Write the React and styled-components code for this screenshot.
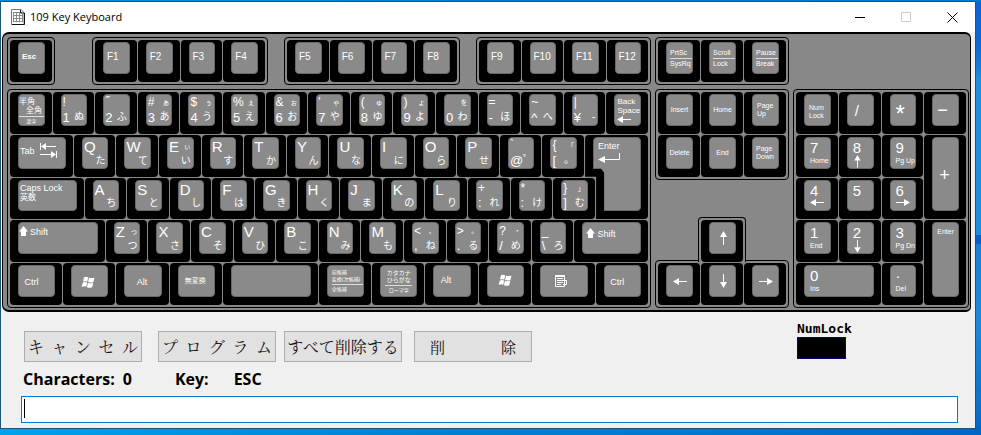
import React from "react";
import styled, { createGlobalStyle } from "styled-components";

const SANS = '"Liberation Sans", "Noto Sans CJK JP", sans-serif';
const UI = '"Open Sans", "Noto Sans", "Noto Sans CJK JP", sans-serif';

const GlobalStyle = createGlobalStyle`
  * { box-sizing: border-box; }
  body { margin: 0; font-family: ${UI}; }
  button { margin: 0; padding: 0; font: inherit; color: inherit; }
`;

const Desktop = styled.div`
  min-height: 100vh;
  display: flex;
  padding: 1px 5px 6px 0;
  background:
    linear-gradient(90deg, #00a2ea, #0080cf 45%, #0078cc 70%, #0066c4) bottom / 100% 8px no-repeat,
    linear-gradient(90deg, #008ad8, #0078cf) top / 100% 2px no-repeat,
    linear-gradient(#0a62d8, #0a68d8 10%, #1580dc 16%, #1c8fe0 18%, #1a8ee0 54%, #0560cc 54%, #0560cc 56%, #1580d8 56%, #1a8ade 74%, #0a70cc 94%, #0063c8);
`;

const Window = styled.main`
  flex: 1;
  min-width: 0;
  display: flex;
  flex-direction: column;
  border: 1px solid #1b5577;
  background: #f0f0f0;
`;

const TitleBar = styled.header`
  display: flex;
  align-items: center;
  height: 30px;
  padding-left: 10px;
  background: #fff;
`;

const Title = styled.h1`
  flex: 1;
  margin: 0 0 0 5px;
  font-size: 11px;
  font-weight: 400;
  line-height: 16px;
  color: #000;
`;

const WindowButton = styled.button`
  width: 46px;
  height: 28px;
  display: grid;
  place-items: center;
  border: 0;
  background: transparent;
  color: ${(p) => (p.disabled ? "#ccc" : "#000")};
`;

const Board = styled.section`
  display: grid;
  grid-template-columns: 644fr 134fr 176fr;
  grid-template-rows: 48px auto;
  gap: 4px;
  margin: 0 4px 0 1px;
  padding: 3px 1px 2px 4px;
  border: solid #000;
  border-width: 2px 1px 2px 1px;
  border-radius: 7px 6px 5px 7px;
  background: #888;
  color: #fff;
  font-family: ${SANS};
`;

const FunctionRow = styled.div`
  display: grid;
  grid-template-columns: 48fr 5fr 176fr 176fr 175fr;
  column-gap: 16px;
`;

const Frame = styled.div`
  display: grid;
  grid-template-columns: repeat(${(p) => p.$cols}, minmax(0, 1fr));
  grid-template-rows: repeat(${(p) => p.$rows}, minmax(0, 1fr));
  gap: 1px;
  height: ${(p) => [0, 48, 91, 0, 0, 219][p.$rows]}px;
  padding: 2px;
  border: 1px solid #000;
  border-radius: 4px;
  background: #888;
`;

const NavColumn = styled.div`
  display: flex;
  flex-direction: column;
  justify-content: space-between;
`;

const ArrowCluster = styled.div`
  display: flex;
  flex-direction: column;
  align-items: center;
`;

const UpFrame = styled(Frame)`
  position: relative;
  width: calc((100% - 6px) / 3 + 6px);
  height: 45px;
  margin-bottom: -2px;
  padding-bottom: 0;
  border-bottom: 0;
  border-radius: 4px 4px 0 0;
`;

const ArrowFrame = styled(Frame)`
  width: 100%;
`;

const KeyBase = styled.button`
  grid-column: ${(p) => (p.$col ? `${p.$col} / ` : "")}span ${(p) => p.$span || 1};
  grid-row: ${(p) => (p.$row ? `${p.$row} / ` : "")}span ${(p) => p.$tall || 1};
  display: flex;
  min-width: 0;
  padding: 2px 7px 8px 8px;
  border: 0;
  border-radius: 4px;
  background: #000;
  text-align: left;
`;

const EnterBase = styled(KeyBase)`
  clip-path: polygon(0 0, 100% 0, 100% 100%, 11px 100%, 11px 42px, 0 42px);
`;

const Cap = styled.span`
  flex: 1;
  min-width: 0;
  display: flex;
  flex-direction: column;
  justify-content: ${(p) => p.$justify || "center"};
  align-items: ${(p) => p.$align || "stretch"};
  padding: ${(p) => p.$pad || "0"};
  border: 1px solid #6a6a6a;
  border-radius: 4px;
  background: #8a8a8a;
  white-space: nowrap;
  font-size: ${(p) => p.$size || 7}px;
  font-weight: ${(p) => (p.$bold ? 700 : 400)};
  line-height: ${(p) => p.$line || 8}px;
`;

const EnterCap = styled(Cap)`
  clip-path: polygon(0 0, 100% 0, 100% 100%, 11px 100%, 11px 36px, 8px 32px, 0 32px);
`;

const Pair = styled.span`
  flex: 1;
  display: flex;
  align-items: center;
  justify-content: space-between;
  padding: 0 2px 0 1px;
  line-height: 1;
`;

const Glyph = styled.span`
  font-size: ${(p) => p.$size}px;
`;

const WithIcon = styled.span`
  display: flex;
  align-items: center;
  gap: ${(p) => p.$gap || 2}px;
`;

const Rule = styled.span`
  align-self: stretch;
  height: 1px;
  margin: 1px 0;
  background: #ddd;
`;

const Indent = styled.span`
  padding-left: 7px;
`;

const Tiny = styled.span`
  align-self: ${(p) => p.$self || "auto"};
  font-size: ${(p) => p.$size || 5}px;
  line-height: ${(p) => p.$line || 6}px;
`;

const Panel = styled.section`
  display: grid;
  grid-template-columns: 1fr 161px;
  padding: 11px 17px 0 20px;
  color: #000;
`;

const Actions = styled.div`
  display: flex;
  padding: 8px 0 0 3px;
`;

const ActionButton = styled.button`
  display: flex;
  align-items: center;
  justify-content: ${(p) => p.$fit || "space-between"};
  width: 118px;
  height: 31px;
  margin-right: ${(p) => p.$after || 0}px;
  padding: 0 ${(p) => p.$inset || 3}px;
  border: 1px solid #adadad;
  background: #e1e1e1;
  color: #1c1414;
  font-family: "Noto Serif CJK JP", "Noto Sans CJK JP", serif;
  font-size: ${(p) => p.$size || 16}px;
  font-weight: 400;
  white-space: nowrap;
`;

const Status = styled.dl`
  display: flex;
  margin: 6px 0 0 2px;
  font-size: 16px;
  font-weight: 700;
  line-height: 22px;
  dt { margin-right: 8px; }
  dd { margin: 0 43px 0 0; }
  dd + dt { margin-right: 25px; }
`;

const NumLock = styled.div`
  font-family: "DejaVu Sans Mono", monospace;
  font-size: 13px;
  font-weight: 700;
  line-height: 12px;
`;

const Lamp = styled.div`
  width: 49px;
  height: 22px;
  margin-top: 2px;
  border: 1px solid #000080;
  background: #000;
`;

const Entry = styled.div`
  position: relative;
  margin: 6px 17px 4px 20px;
`;

const EntryInput = styled.input`
  display: block;
  width: 100%;
  height: 27px;
  padding: 0 3px;
  border: 1px solid #0078d7;
  outline: 0;
  background: #fff;
  font: 16px ${UI};
  caret-color: transparent;
`;

const Caret = styled.span`
  position: absolute;
  top: 3px;
  left: 3px;
  width: 1px;
  height: 19px;
  background: #000;
`;

const ARROWS = {
  left: [14, 8, "M5 4.5H14", "M0 4.5L6 1V8Z"],
  right: [14, 8, "M0 4.5H9", "M14 4.5L8 1V8Z"],
  up: [8, 14, "M4.5 5V14", "M4.5 0L1 6H8Z"],
  down: [8, 14, "M4.5 0V9", "M4.5 14L1 8H8Z"],
};

function Arrow({ dir }) {
  const [w, h, line, head] = ARROWS[dir];
  return (
    <svg width={w} height={h} viewBox={`0 0 ${w} ${h}`} aria-hidden="true">
      <path d={line} stroke="#fff" />
      <path d={head} fill="#fff" />
    </svg>
  );
}

const Flag = () => (
  <svg width="14" height="13" viewBox="0 0 14 13" fill="#fff" aria-hidden="true">
    <path d="M3 1.2Q5 .2 7.2 1.2L6.3 5.6Q4.4 4.7 2 5.6ZM8 1.5Q10.5 2.6 13.5 1.5L12.4 5.9Q10 7 7.1 6ZM1.8 6.4Q4 5.5 6.2 6.4L5.3 10.8Q3 9.9 .6 10.9ZM6.9 6.8Q9.5 7.8 12.2 6.8L11.2 11.2Q8.5 12.3 6 11.2Z" />
  </svg>
);

const MenuIcon = () => (
  <svg width="12" height="13" viewBox="0 0 12 13" fill="none" stroke="#fff" aria-hidden="true">
    <path d="M.5 1.5H9.5V12.5H.5ZM2 4.5H8M2 6.5H11.5V10.5H8M2 8.5H8M2 10.5H6" />
    <path d="M0 1H10V3H0Z" fill="#fff" stroke="none" />
  </svg>
);

const TabIcon = () => (
  <svg width="17" height="17" viewBox="0 0 17 17" fill="#fff" stroke="#fff" aria-hidden="true">
    <path d="M.5 1V8M6 4.5H16M16.5 9V16M0 12.5H11" />
    <path d="M1 4.5L6 1V8ZM16 12.5L11 9V16Z" stroke="none" />
  </svg>
);

const ShiftIcon = () => (
  <svg width="9" height="11" viewBox="0 0 9 11" fill="#fff" aria-hidden="true">
    <path d="M4.5 0L9 5.5H7V10H2V5.5H0Z" />
  </svg>
);

const ReturnIcon = () => (
  <svg width="22" height="10" viewBox="0 0 22 10" aria-hidden="true">
    <path d="M21.5 0V6.5H6" fill="none" stroke="#fff" />
    <path d="M0 6.5L7 3V10Z" fill="#fff" />
  </svg>
);

const AppIcon = () => (
  <svg width="14" height="16" viewBox="0 0 14 16" fill="none" aria-hidden="true">
    <path d="M.5.5H10L13 3.5V15.5H.5Z" fill="#fff" stroke="#777" />
    <path d="M2 3.5H11M2 6.5H11M2 9.5H11M2 12.5H11M2.5 3V13M5.5 3V13M8.5 3V13M11.5 5V13" stroke="#888" />
    <path d="M9.5 1V4H13M13.5 4V15.5H1" stroke="#111" />
  </svg>
);

function Key({ cap, children, ...place }) {
  return (
    <KeyBase type="button" {...place}>
      <Cap {...cap}>{children}</Cap>
    </KeyBase>
  );
}

function FnKey({ children }) {
  return <Key cap={{ $size: 10, $line: 12, $pad: "0 0 2px 3px" }}>{children}</Key>;
}

// Each character key carries [top-left, top-right, bottom-left, bottom-right].
function CharKey({ legend: [tl, tr, bl, br], col, row }) {
  const letter = /^[A-Z]$/.test(tl);
  return (
    <Key $span={4} $col={col} $row={row} cap={{ $pad: letter ? "1px 0 0" : "0" }}>
      <Pair>
        <Glyph $size={letter ? 15 : 12}>{tl}</Glyph>
        <Glyph $size={7}>{tr}</Glyph>
      </Pair>
      <Pair>
        <Glyph $size={13}>{bl}</Glyph>
        <Glyph $size={10}>{br}</Glyph>
      </Pair>
    </Key>
  );
}

// A run of character keys, four grid units apart from the start column.
const CharKeys = ({ legends, row, start }) =>
  legends.map((l, i) => <CharKey key={i} legend={l} row={row} col={start + i * 4} />);

function PadKey({ digit, sub, dir, span }) {
  return (
    <Key $span={span} cap={{ $justify: "flex-start", $pad: "2px 0 0 5px", $size: 15, $line: 15 }}>
      <span>{digit}</span>
      {sub && <Tiny $size={7} $line={12}>{sub}</Tiny>}
      {dir && <Arrow dir={dir} />}
    </Key>
  );
}

const SMALL = { $align: "center", $size: 7, $line: 8 };
const WORD = { $size: 9, $line: 10, $align: "center", $pad: "0 4px 0 0" };

const DIGITS = [
  ["!", "", "1", "ぬ"], ["˝", "", "2", "ふ"], ["#", "ぁ", "3", "あ"], ["$", "ぅ", "4", "う"],
  ["%", "ぇ", "5", "え"], ["&", "ぉ", "6", "お"], ["'", "ゃ", "7", "や"], ["(", "ゅ", "8", "ゆ"],
  [")", "ょ", "9", "よ"], ["", "を", "0", "わ"], ["=", "", "-", "ほ"], ["~", "", "^", "へ"], ["|", "", "¥", "-"],
];
const TOP = [
  ["Q", "", "", "た"], ["W", "", "", "て"], ["E", "ぃ", "", "い"], ["R", "", "", "す"], ["T", "", "", "か"],
  ["Y", "", "", "ん"], ["U", "", "", "な"], ["I", "", "", "に"], ["O", "", "", "ら"], ["P", "", "", "せ"],
  ["`", "", "@", "゜"], ["{", "「", "[", "。"],
];
const HOME = [
  ["A", "", "", "ち"], ["S", "", "", "と"], ["D", "", "", "し"], ["F", "", "", "は"], ["G", "", "", "き"],
  ["H", "", "", "く"], ["J", "", "", "ま"], ["K", "", "", "の"], ["L", "", "", "り"],
  ["+", "", ":", "れ"], ["*", "", ":", "け"], ["}", "」", "]", "む"],
];
const LOWER = [
  ["Z", "っ", "", "つ"], ["X", "", "", "さ"], ["C", "", "", "そ"], ["V", "", "", "ひ"], ["B", "", "", "こ"],
  ["N", "", "", "み"], ["M", "", "", "も"], ["<", "、", ",", "ね"], [">", "。", ".", "る"],
  ["?", "・", "/", "め"], ["_", "", "\\", "ろ"],
];

const Spread = ({ text }) => [...text].map((c, i) => <span key={i}>{c}</span>);

export default function App() {
  return (
    <Desktop>
      <GlobalStyle />
      <Window>
        <TitleBar>
          <AppIcon />
          <Title>109 Key Keyboard</Title>
          <WindowButton type="button" aria-label="Minimize">
            <svg width="11" height="11"><path d="M0 5.5H10" stroke="currentColor" /></svg>
          </WindowButton>
          <WindowButton type="button" aria-label="Maximize" disabled>
            <svg width="11" height="11"><path d="M.5.5H9.5V9.5H.5Z" fill="none" stroke="currentColor" /></svg>
          </WindowButton>
          <WindowButton type="button" aria-label="Close">
            <svg width="11" height="11"><path d="M.5.5L10.5 10.5M10.5.5L.5 10.5" stroke="currentColor" /></svg>
          </WindowButton>
        </TitleBar>

        <Board aria-label="Keyboard">
          <FunctionRow>
            <Frame $cols={1} $rows={1}>
              <Key cap={{ $size: 8, $bold: true, $align: "center", $pad: "0 5px 3px 0" }}>Esc</Key>
            </Frame>
            <span />
            {[["F1", "F2", "F3", "F4"], ["F5", "F6", "F7", "F8"], ["F9", "F10", "F11", "F12"]].map((g) => (
              <Frame key={g[0]} $cols={4} $rows={1}>
                {g.map((k) => <FnKey key={k}>{k}</FnKey>)}
              </Frame>
            ))}
          </FunctionRow>
          <Frame $cols={3} $rows={1}>
            {[["PrtSc", "SysRq"], ["Scroll", "Lock"], ["Pause", "Break"]].map(([a, b]) => (
              <Key key={a} cap={{ $pad: "0 0 0 3px" }}>
                <span>{a}</span><Rule /><span>{b}</span>
              </Key>
            ))}
          </Frame>
          <span />

          <Frame $cols={60} $rows={5}>
            <Key $col={1} $row={1} $span={4} cap={{ $size: 8, $line: 9, $justify: "flex-start", $pad: "2px 0 0" }}>
              <span>半角</span>
              <Indent>全角</Indent>
              <Rule />
              <Tiny $self="center">漢字</Tiny>
            </Key>
            <CharKeys legends={DIGITS} row={1} start={5} />
            <Key $col={57} $row={1} $span={4} cap={{ $size: 8, $line: 9, $pad: "0 0 0 2px" }}>
              <span>Back</span><span>Space</span><Arrow dir="left" />
            </Key>

            <Key $col={1} $row={2} $span={6} cap={{ $size: 9, $pad: "0 0 4px 1px" }}>
              <WithIcon $gap={5}>Tab <TabIcon /></WithIcon>
            </Key>
            <CharKeys legends={TOP} row={2} start={7} />
            <EnterBase type="button" $col={55} $row={2} $span={6} $tall={2}>
              <EnterCap $size={9} $line={13} $justify="flex-start" $pad="2px 0 0 4px">
                <span>Enter</span><ReturnIcon />
              </EnterCap>
            </EnterBase>

            <Key $col={1} $row={3} $span={7} cap={{ $size: 9, $line: 9, $justify: "flex-start", $pad: "3px 0 0 1px" }}>
              <span>Caps Lock</span><Tiny $size={8} $line={9}>英数</Tiny>
            </Key>
            <CharKeys legends={HOME} row={3} start={8} />

            <Key $col={1} $row={4} $span={9} cap={{ $size: 9, $justify: "flex-start", $pad: "3px 0 0" }}>
              <WithIcon><ShiftIcon />Shift</WithIcon>
            </Key>
            <CharKeys legends={LOWER} row={4} start={10} />
            <Key $col={54} $row={4} $span={7} cap={{ $size: 9, $justify: "flex-start", $pad: "5px 0 0 3px" }}>
              <WithIcon><ShiftIcon />Shift</WithIcon>
            </Key>

            <Key $span={5} cap={{ ...WORD, $pad: "2px 10px 0 0" }}>Ctrl</Key>
            <Key $span={5} aria-label="Windows" cap={{ ...WORD, $pad: "3px 3px 0 0" }}><Flag /></Key>
            <Key $span={5} cap={{ ...WORD, $pad: "2px 2px 0 0" }}>Alt</Key>
            <Key $span={5} cap={{ ...WORD, $size: 7, $pad: "0 2px 0 0" }}>無変換</Key>
            <Key $span={9} aria-label="Space" />
            <Key $span={5} cap={{ $size: 5, $line: 7, $pad: "0 0 0 4px" }}>
              <span>前候補</span><span>変換(次候補)</span><Rule /><span>全候補</span>
            </Key>
            <Key $span={5} cap={{ $size: 5, $line: 6, $align: "center", $pad: "0 4px" }}>
              <Tiny $size={6} $line={7}>カタカナ</Tiny><Tiny $size={6} $line={7}>ひらがな</Tiny><Rule /><span>ローマ字</span>
            </Key>
            <Key $span={5} cap={{ ...WORD, $pad: "0 12px 2px 0" }}>Alt</Key>
            <Key $span={5} aria-label="Windows" cap={{ ...WORD, $pad: "0 0 2px" }}><Flag /></Key>
            <Key $span={6} aria-label="Menu" cap={{ ...WORD, $pad: "0 6px 2px 0" }}><MenuIcon /></Key>
            <Key $span={5} cap={{ ...WORD, $pad: "2px 10px 0 0" }}>Ctrl</Key>
          </Frame>

          <NavColumn>
            <Frame $cols={3} $rows={2}>
              <Key cap={SMALL}>Insert</Key>
              <Key cap={SMALL}>Home</Key>
              <Key cap={{ $pad: "0 0 0 4px" }}><span>Page</span><span>Up</span></Key>
              <Key cap={SMALL}>Delete</Key>
              <Key cap={SMALL}>End</Key>
              <Key cap={{ $pad: "0 0 0 3px" }}><span>Page</span><span>Down</span></Key>
            </Frame>
            <ArrowCluster>
              <UpFrame $cols={1} $rows={1}>
                <Key aria-label="Up" cap={SMALL}><Arrow dir="up" /></Key>
              </UpFrame>
              <ArrowFrame $cols={3} $rows={1}>
                <Key aria-label="Left" cap={SMALL}><Arrow dir="left" /></Key>
                <Key aria-label="Down" cap={SMALL}><Arrow dir="down" /></Key>
                <Key aria-label="Right" cap={SMALL}><Arrow dir="right" /></Key>
              </ArrowFrame>
            </ArrowCluster>
          </NavColumn>

          <Frame $cols={4} $rows={5}>
            <Key cap={{ $pad: "4px 0 0 4px" }}><span>Num</span><span>Lock</span></Key>
            <Key cap={{ $size: 15, $line: 16, $pad: "2px 0 0 7px" }}>/</Key>
            <Key cap={{ $size: 24, $line: 24, $pad: "9px 0 0 5px" }}>*</Key>
            <Key cap={{ $size: 18, $line: 18, $pad: "0 0 0 4px" }}>−</Key>
            <PadKey digit="7" sub="Home" />
            <PadKey digit="8" dir="up" />
            <PadKey digit="9" sub="Pg Up" />
            <Key $tall={2} cap={{ $size: 18, $line: 18, $align: "center", $pad: "2px 2px 0 0" }}>+</Key>
            <PadKey digit="4" dir="left" />
            <PadKey digit="5" />
            <PadKey digit="6" dir="right" />
            <PadKey digit="1" sub="End" />
            <PadKey digit="2" dir="down" />
            <PadKey digit="3" sub="Pg Dn" />
            <Key $tall={2} cap={{ $justify: "flex-start", $pad: "5px 0 0 4px" }}>Enter</Key>
            <PadKey digit="0" sub="Ins" span={2} />
            <PadKey digit="·" sub="Del" />
          </Frame>
        </Board>

        <Panel>
          <div>
            <Actions>
              <ActionButton type="button" aria-label="キャンセル" $after={16}><Spread text="キャンセル" /></ActionButton>
              <ActionButton type="button" aria-label="プログラム" $after={8}><Spread text="プログラム" /></ActionButton>
              <ActionButton type="button" $after={12} $fit="center">すべて削除する</ActionButton>
              <ActionButton type="button" aria-label="削除" $inset={15} $size={15}><Spread text="削除" /></ActionButton>
            </Actions>
            <Status>
              <dt>Characters:</dt><dd>0</dd>
              <dt>Key:</dt><dd>ESC</dd>
            </Status>
          </div>
          <NumLock>
            NumLock
            <Lamp role="img" aria-label="NumLock off" />
          </NumLock>
        </Panel>
        <Entry>
          <EntryInput type="text" aria-label="Key sequence" />
          <Caret />
        </Entry>
      </Window>
    </Desktop>
  );
}
